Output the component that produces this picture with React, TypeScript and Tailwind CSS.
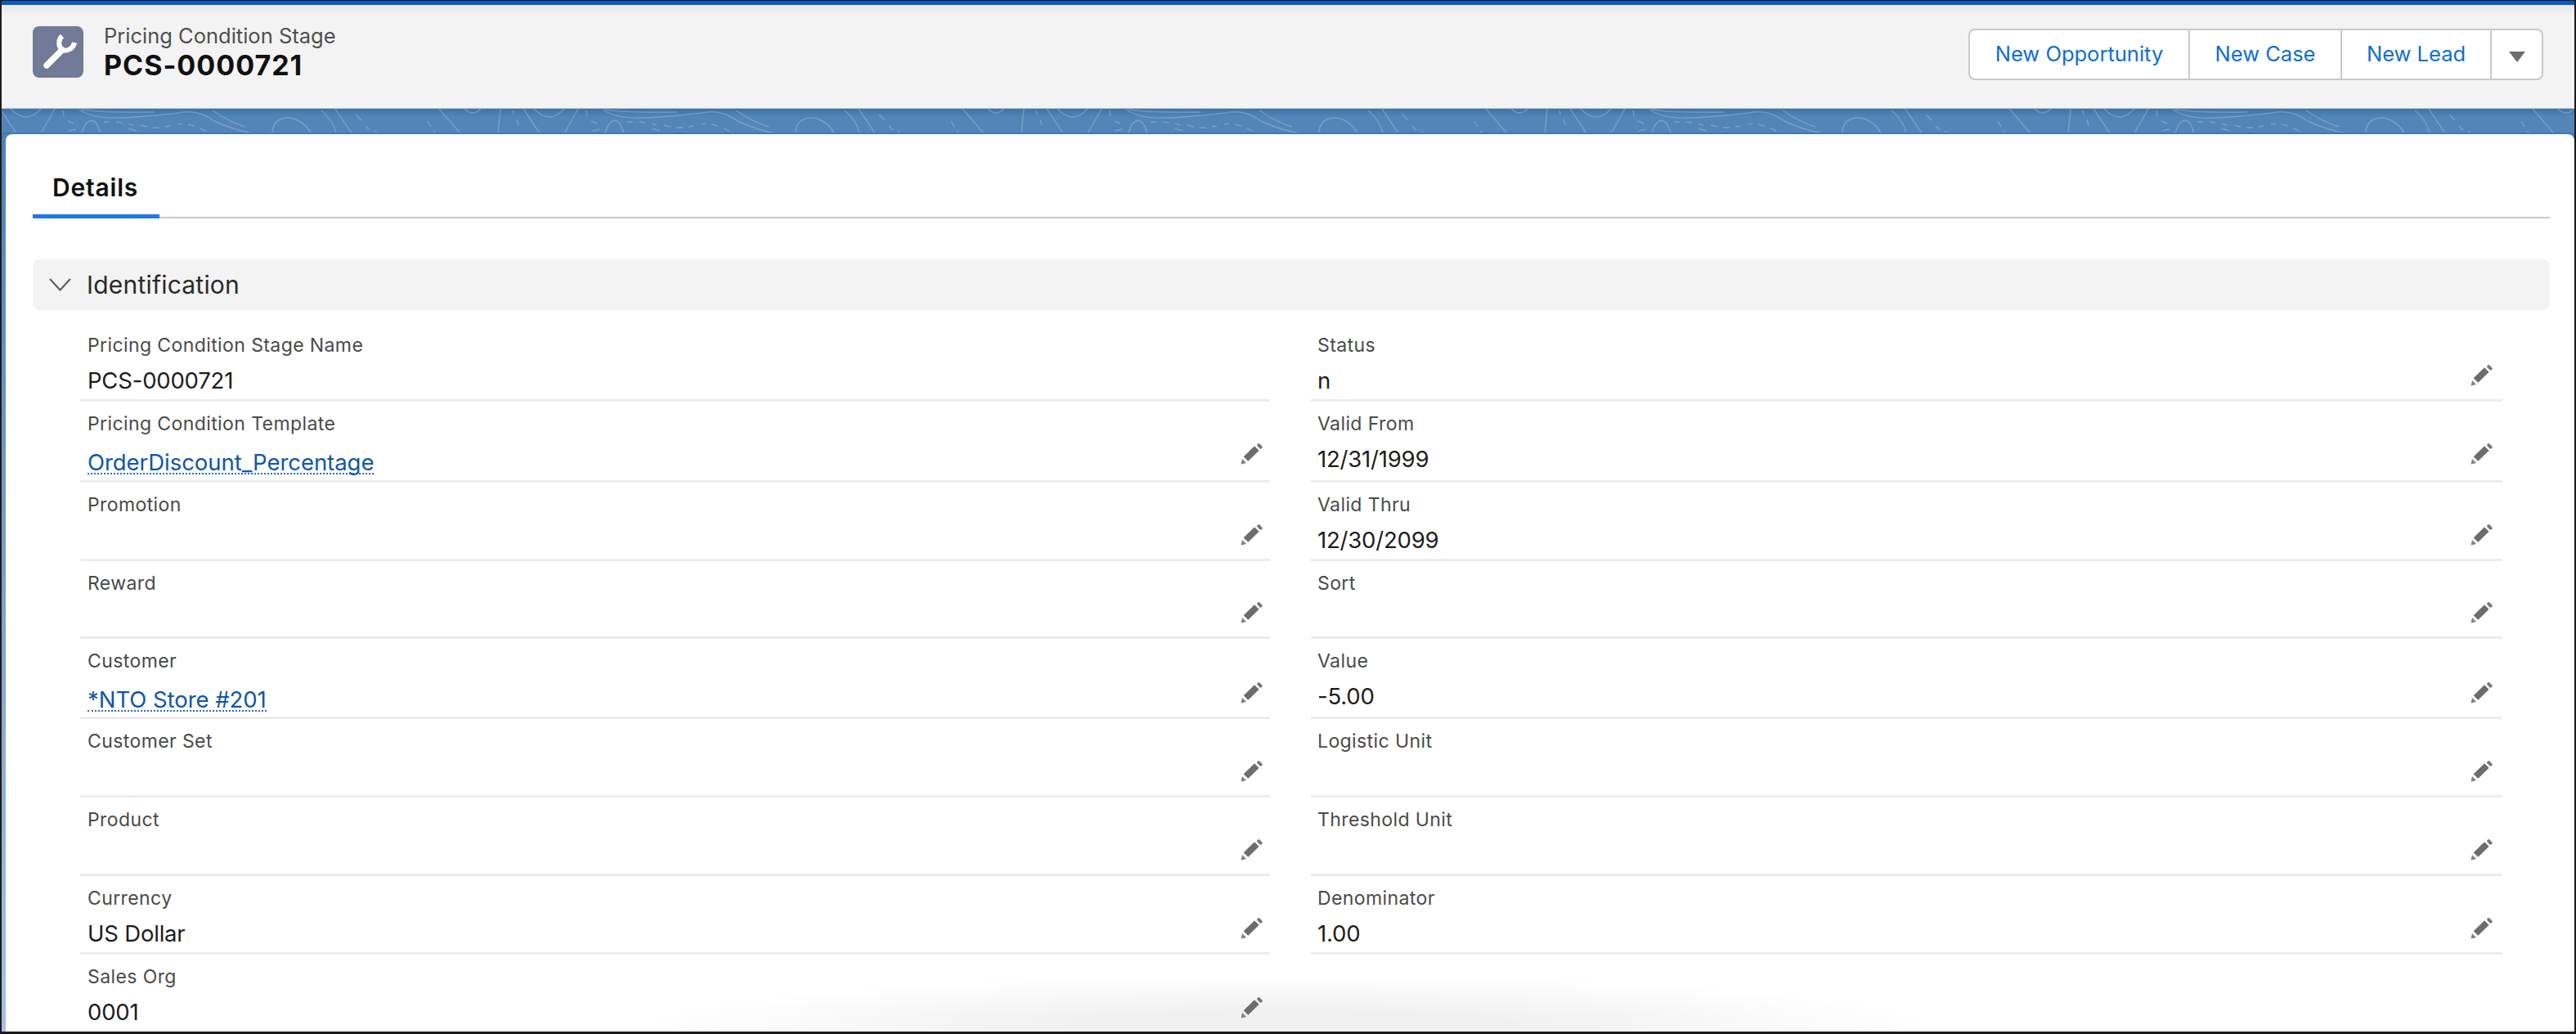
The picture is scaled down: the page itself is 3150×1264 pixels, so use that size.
import React from 'react';

type Row = { label: string; value?: string; link?: boolean; pencil: boolean; lift?: boolean };
const rowH = ['h-[96px]', 'h-[99px]', 'h-[96px]', 'h-[95px]', 'h-[98px]', 'h-[96px]', 'h-[96px]', 'h-[96px]', 'h-[96px]'];

const left: Row[] = [
  { label: 'Pricing Condition Stage Name', value: 'PCS-0000721', pencil: false },
  { label: 'Pricing Condition Template', value: 'OrderDiscount_Percentage', link: true, pencil: true, lift: true },
  { label: 'Promotion', pencil: true },
  { label: 'Reward', pencil: true },
  { label: 'Customer', value: '*NTO Store #201', link: true, pencil: true },
  { label: 'Customer Set', pencil: true },
  { label: 'Product', pencil: true },
  { label: 'Currency', value: 'US Dollar', pencil: true },
  { label: 'Sales Org', value: '0001', pencil: true },
];
const right: Row[] = [
  { label: 'Status', value: 'n', pencil: true },
  { label: 'Valid From', value: '12/31/1999', pencil: true, lift: true },
  { label: 'Valid Thru', value: '12/30/2099', pencil: true },
  { label: 'Sort', pencil: true },
  { label: 'Value', value: '-5.00', pencil: true },
  { label: 'Logistic Unit', pencil: true },
  { label: 'Threshold Unit', pencil: true },
  { label: 'Denominator', value: '1.00', pencil: true },
];

function Pencil() {
  return (
    <svg width="28" height="28" viewBox="0 0 28 28" fill="none" className="block">
      <path d="M23.2 3.2 L25.6 5.6" stroke="#787878" strokeWidth="4" strokeLinecap="round" />
      <path d="M7.5 20 L20.8 7" stroke="#6c6c6c" strokeWidth="8" />
      <path d="M1.5 26.5 L3 20 L8 25 Z" fill="#808080" />
    </svg>
  );
}

function Field({ row, index, second }: { row?: Row; index: number; second?: boolean }) {
  if (!row) return <div className={rowH[index]} />;
  const last = index === 8;
  return (
    <div className={`${rowH[index]} flex justify-between items-end ${second ? 'pl-[8px] pr-[12px]' : 'pl-[9px] pr-[9px]'} ${last ? '' : 'border-b-[3px] border-[#ececec]'}`}>
      <div className="self-start pt-[13px] flex flex-col items-start">
        <div className="h-[28px] leading-[28px] text-[23px] tracking-[0.4px] text-[#4a4a4a]">{row.label}</div>
        {row.value && row.link && (
          <a className="mt-[20px] leading-[26px] h-[28px] text-[27.5px] tracking-[-0.05px] text-[#0f56ab] border-b-2 border-dotted border-[#2b6cc0]">
            {row.value}
          </a>
        )}
        {row.value && !row.link && (
          <div className="mt-[11px] h-[36px] leading-[36px] text-[27.5px] tracking-[-0.2px] text-[#1c1c1c]">{row.value}</div>
        )}
      </div>
      {row.pencil && (
        <div className={last ? 'mb-[17px]' : row.lift ? 'mb-[18px]' : 'mb-[15px]'}>
          <Pencil />
        </div>
      )}
    </div>
  );
}

function Topo() {
  return (
    <svg className="absolute inset-0 w-full h-full" aria-hidden="true">
      <defs>
        <pattern id="topo" x="-2" y="0" width="640" height="30" patternUnits="userSpaceOnUse">
          <g fill="none" stroke="#ffffff" strokeOpacity="0.2" strokeWidth="1.5">
            <path d="M13 0 Q32 20 50 0" />
            <path d="M0 0 L20 30" />
            <path d="M67 0 L50 30" />
            <path d="M97 1 Q115 13 150 11 Q200 8 225 4 Q245 2 262 15 Q285 26 310 30" />
            <path d="M100 1 Q130 5 188 4" />
            <path d="M260 2 Q280 16 300 22" />
            <path d="M100 30 C104 14 112 11 118 18 Q121 23 123 30" />
            <path d="M333 30 C333 10 352 9 362 13 C372 18 378 25 380 30" />
            <path d="M393 2 Q408 15 411 30" />
            <path d="M410 0 L430 30" />
            <path d="M537 0 L563 30" />
            <path d="M568 0 Q578 10 588 0" />
            <path d="M612 0 L609 30" />
            <path d="M77 2 L78 9" />
            <path d="M83 15 L90 18" />
            <path d="M127 16 L134 16" />
            <path d="M142 16 L149 17" />
            <path d="M157 18 L163 20" />
            <path d="M172 20 L180 22" />
            <path d="M187 23 L195 23" />
            <path d="M202 22 L208 21" />
            <path d="M217 19 L223 18" />
            <path d="M230 19 L238 21" />
            <path d="M245 24 L252 27" />
            <path d="M157 24 L167 27" />
            <path d="M84 27 L93 25" />
            <path d="M435 7 L442 14" />
            <path d="M447 21 L452 26" />
            <path d="M458 27 L462 30" />
            <path d="M523 15 L527 22" />
            <path d="M530 27 L533 30" />
            <path d="M627 2 L628 7" />
            <path d="M632 13 L634 20" />
          </g>
        </pattern>
      </defs>
      <rect width="100%" height="100%" fill="url(#topo)" />
    </svg>
  );
}

export default function App() {
  return (
    <div
      className="w-full h-[1264px] overflow-hidden flex flex-col border-x-2 border-t border-b-[3px] border-[#1b1b1b] bg-white"
      style={{ fontFamily: 'Inter, "Noto Sans", sans-serif' }}
    >
      <div className="h-[5px] shrink-0 bg-[#0a5ac2]" />
      <header className="h-[127px] shrink-0 flex justify-between items-start pl-[38px] pr-[38px] bg-gradient-to-b from-[#e8e8e8] to-[#f3f3f3] to-[14px] border-b border-[#c4c4c4]">
        <div className="flex items-start pt-[26px]">
          <div className="w-[62px] h-[63px] rounded-[8px] bg-[#717a96] flex items-center justify-center">
            <svg width="62" height="63" viewBox="0 0 62 63" fill="none">
              <path d="M17 48 L36 29" stroke="#ffffff" strokeWidth="7.5" strokeLinecap="round" />
              <path d="M36 12 A11.5 11.5 0 0 0 36 29 A11.5 11.5 0 0 0 51 20" stroke="#ffffff" strokeWidth="6" strokeLinecap="butt" />
            </svg>
          </div>
          <div className="ml-[25px] flex flex-col">
            <div className="mt-[-3px] h-[30px] leading-[30px] text-[25.5px] text-[#4f4f4f]">Pricing Condition Stage</div>
            <div className="mt-[3px] h-[36px] leading-[36px] text-[34px] font-bold tracking-[1px] text-[#111111]">PCS-0000721</div>
          </div>
        </div>
        <div className="mt-[29px] h-[63px] flex rounded-[8px] border-2 border-[#c9c9c9] bg-white text-[25.5px] text-[#0f6fd1]">
          <button className="w-[269px] flex items-center justify-center border-r-2 border-[#c9c9c9]">New Opportunity</button>
          <button className="w-[186px] flex items-center justify-center border-r-2 border-[#c9c9c9]">New Case</button>
          <button className="w-[183px] flex items-center justify-center border-r-2 border-[#c9c9c9]">New Lead</button>
          <button className="w-[61px] pt-[5px] flex items-center justify-center">
            <svg width="20" height="13" viewBox="0 0 20 13"><path d="M0 0 H20 L10 13 Z" fill="#6d6d6d" /></svg>
          </button>
        </div>
      </header>
      <div className="relative h-[31px] shrink-0 bg-gradient-to-b from-[#3c74ab] to-[#5485b8] to-[10px] border-b-2 border-[#4079b4] overflow-hidden">
        <Topo />
      </div>
      <div className="flex-1 min-h-0 pl-[5px] bg-gradient-to-b from-[#4f82b6] to-[#a9c0e0]">
        <main className="relative h-full rounded-t-[8px] bg-white overflow-hidden">
          <div className="absolute left-[770px] bottom-[-70px] w-[1600px] h-[140px] pointer-events-none bg-[radial-gradient(closest-side,#f0f0f0_35%,#ffffff00)]" />
          <div className="h-[103px] mx-[33px] mr-[30px] flex border-b-2 border-[#c9c9c9]">
            <div className="w-[155px] h-[103px] pt-[32px] pl-[24px] flex items-center border-b-[5px] border-[#1b7ae6] text-[30px] font-semibold tracking-[0.8px] text-[#111111]">
              Details
            </div>
          </div>
          <div className="mt-[50px] h-[62px] ml-[33px] mr-[30px] rounded-[8px] bg-[#f3f3f3] flex items-center pl-[20px] text-[#2a2a2a]">
            <svg width="27" height="16" viewBox="0 0 27 16" fill="none">
              <path d="M1 1 L13.5 14.5 L26 1" stroke="#606060" strokeWidth="2.2" />
            </svg>
            <span className="ml-[19px] text-[30px] tracking-[0.2px]">Identification</span>
          </div>
          <div className="relative mt-[16px] pl-[91px] grid grid-cols-[1455px_1457px] gap-x-[50px]">
            {left.map((row, i) => (
              <React.Fragment key={row.label}>
                <Field row={row} index={i} />
                <Field row={right[i]} index={i} second />
              </React.Fragment>
            ))}
          </div>
        </main>
      </div>
    </div>
  );
}
